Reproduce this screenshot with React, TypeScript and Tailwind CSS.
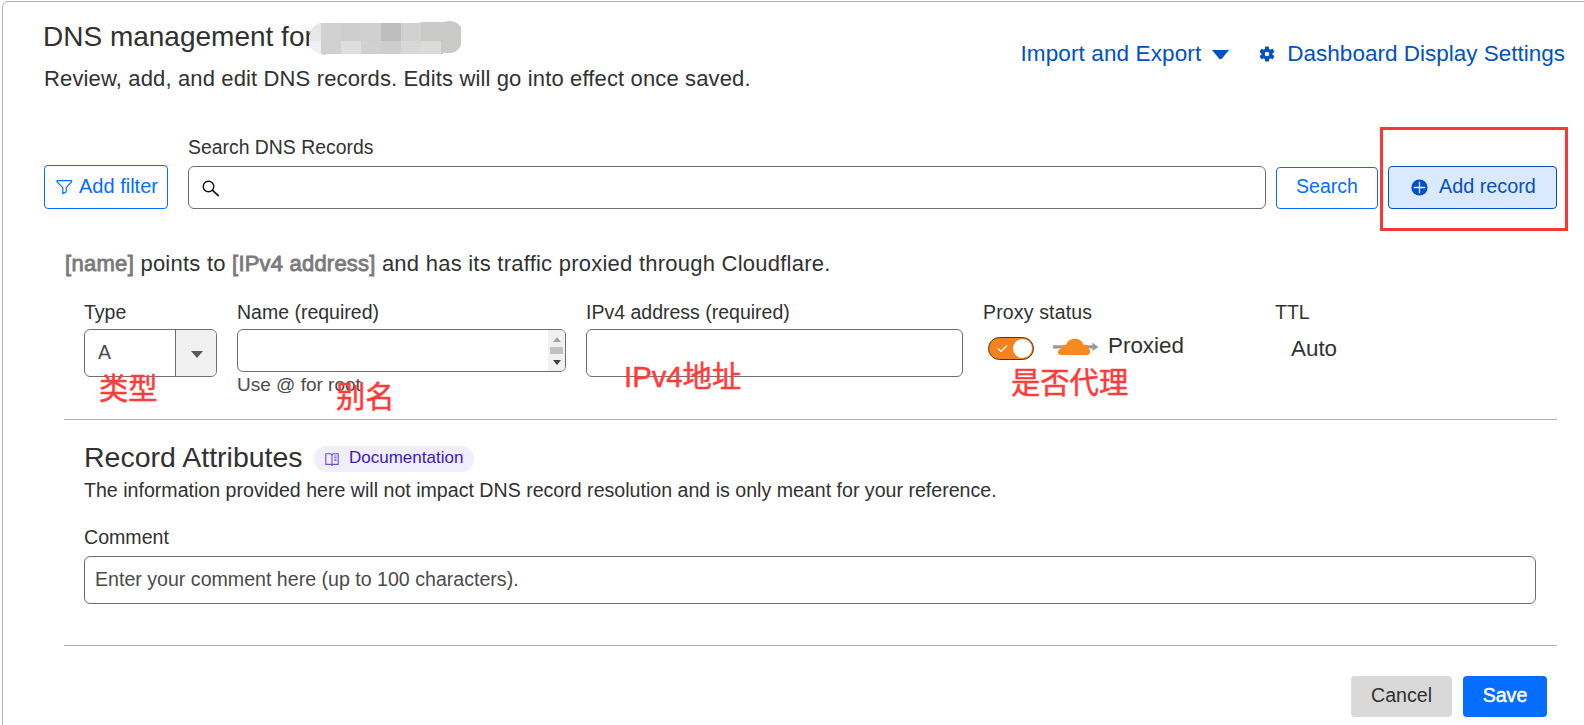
import React from "react";

function FilterIcon() {
  return (
    <svg width="17" height="16" viewBox="0 0 17 16" fill="none" stroke="#056dff" strokeWidth="1.2" strokeLinejoin="round">
      <path d="M1 1.600h14.600v1.200L10.200 8.600v4.400L6.800 14.600V8.600L1 2.800z" />
    </svg>
  );
}

function MagnifierIcon() {
  return (
    <svg width="18" height="18" viewBox="0 0 18 18" fill="none" stroke="#111" strokeWidth="1.4">
      <circle cx="6.500" cy="6.500" r="5.300" />
      <path d="M10.400 10.200l6.400 6" strokeWidth="1.600" />
    </svg>
  );
}

function GearIcon() {
  return (
    <svg width="16" height="18" viewBox="0 0 16 16">
      <g fill="#0051c3">
        <circle cx="8" cy="8" r="5.6" />
        <rect x="6" y="0.4" width="4" height="15.2" rx="0.9" />
        <rect x="6" y="0.4" width="4" height="15.2" rx="0.9" transform="rotate(60 8 8)" />
        <rect x="6" y="0.4" width="4" height="15.2" rx="0.9" transform="rotate(120 8 8)" />
      </g>
      <circle cx="8" cy="8" r="2.3" fill="#fff" />
    </svg>
  );
}

function PlusCircleIcon() {
  return (
    <svg width="17" height="17" viewBox="0 0 17 17">
      <circle cx="8.5" cy="8.5" r="8.1" fill="#0051c3" />
      <path d="M8.5 2.800v11.400M2.800 8.500h11.400" stroke="#dbe9ff" strokeWidth="1.300" />
    </svg>
  );
}

function BookIcon() {
  return (
    <svg width="14" height="13" viewBox="0 0 14 13" fill="none" stroke="#6b4fd8" strokeWidth="1.1">
      <path d="M7 2v10.4M7 2L5.800.800H.800v10.600h5L7 12.400l1.200-1h5V.800h-5z" />
      <path d="M9.200 3h2.400M9.200 4.600h2.400M9.200 6.200h2.400M9.200 7.600h2.400" strokeWidth="0.8" />
    </svg>
  );
}

function ProxyCloud() {
  return (
    <svg width="46" height="18" viewBox="0 0 46 18">
      <path d="M0 7.200h39.500V4.800L45.400 9 39.500 13V10.600H0z" fill="#999" />
      <path
        d="M8.400 17C6 17 5 15.600 5 14.200C5 12 6.600 10.900 8.400 10.700C8 8 10.400 6.300 12.800 7.300C13.800 3.500 17.600 .8 22 .8C26.400 .8 29.500 3.300 30.800 6.900C33.800 6.600 35.300 8.500 35.200 10.400C36.600 11 37.200 12.600 37 14.200C36.800 16 35.800 17 34 17Z"
        fill="#f6891f"
      />
    </svg>
  );
}

function Redaction() {
  return (
    <svg width="154" height="36" viewBox="0 0 154 36">
      <defs>
        <clipPath id="blob">
          <path d="M12 2H110V1.300H134C138 0 142 0 146 1C150 3 152 6 152 8V24C150 29 145 32 139 32H134V33H18L16 34L12 33C5 31 0 26 0 19C0 11 4 4 12 2Z" />
        </clipPath>
      </defs>
      <g clipPath="url(#blob)" shapeRendering="crispEdges">
        <rect width="154" height="36" fill="#d1d1d1" />
        <rect width="12" height="20" fill="#e5e7e9" />
        <rect y="20" width="12" height="16" fill="#eef1f4" />
        <rect x="32" width="20" height="20" fill="#d0cdcf" />
        <rect x="32" y="20" width="20" height="16" fill="#dedede" />
        <rect x="52" width="20" height="20" fill="#d0cfd0" />
        <rect x="72" width="20" height="20" fill="#bdbdbd" />
        <rect x="72" y="20" width="20" height="16" fill="#cecece" />
        <rect x="92" y="20" width="20" height="16" fill="#d8d8d8" />
        <rect x="112" width="42" height="36" fill="#c9c9c8" />
        <rect x="112" y="20" width="20" height="16" fill="#dbdbda" />
      </g>
    </svg>
  );
}

function Note({ className, children }: { className: string; children: React.ReactNode }) {
  return (
    <span className={"absolute text-[29.3px] leading-[40px] text-[#ff3b3b] [-webkit-text-stroke:0.5px_#ff3b3b] " + className}>
      {children}
    </span>
  );
}

export default function App() {
  return (
    <div className="relative h-[725px] w-[1584px] overflow-hidden bg-white pl-[2px] pt-px font-['Liberation_Sans','Noto_Sans_CJK_SC',sans-serif] text-[#313131]">
      <div className="h-[740px] w-[1590px] rounded-tl-[6px] border border-[#b2b2b2] pl-[41px] whitespace-nowrap">
        <header className="flex h-[132px] w-[1541px] justify-between">
          <div className="pt-[17px]">
            <div className="relative h-[36px] w-[430px] text-[28px] leading-[36px]">
              <span className="ml-[-1px]">DNS management for</span>
              <div className="absolute left-[265px] top-[2px]">
                <Redaction />
              </div>
            </div>
            <p className="mt-[10px] h-[28px] text-[22px] leading-[28px] tracking-[0.14px]">
              Review, add, and edit DNS records. Edits will go into effect once saved.
            </p>
          </div>
          <nav className="mr-[20px] mt-[37px] flex h-[30px] items-center text-[22.5px] leading-[30px] text-[#0051c3]">
            <span className="tracking-[0.12px]">Import and Export</span>
            <svg className="ml-[11px] mr-[30px] mt-px" width="17" height="10" viewBox="0 0 17 10">
              <path d="M0 0h17L10 8.500Q8.500 10 7 8.500z" fill="#0051c3" />
            </svg>
            <GearIcon />
            <span className="ml-[12px]">Dashboard Display Settings</span>
          </nav>
        </header>

        <section className="flex h-[75px] items-end">
          <button className="flex h-[44px] w-[124px] items-center rounded-[4px] border border-[#056dff] pl-[11px] text-[20px] text-[#056dff]">
            <FilterIcon />
            <span className="ml-[6px] pb-[2px]">Add filter</span>
          </button>
          <div className="ml-[20px] w-[1078px]">
            <div className="mb-[7px] h-[24px] text-[19.4px] leading-[24px]">Search DNS Records</div>
            <div className="flex h-[43px] items-center rounded-[6px] border border-[#6e6e6e] pl-[13px] pt-[2px]">
              <MagnifierIcon />
            </div>
          </div>
          <button className="ml-[10px] h-[42px] w-[102px] rounded-[4px] border border-[#056dff] pb-[2px] text-[19.5px] text-[#056dff]">
            Search
          </button>
          <button className="relative ml-[10px] flex h-[43px] w-[169px] items-center rounded-[4px] border border-[#0051c3] bg-[#dbe9ff] pl-[22px] text-[19.8px] text-[#0051c3]">
            <PlusCircleIcon />
            <span className="ml-[11px] pb-px">Add record</span>
            <span className="absolute left-[-9px] top-[-40px] h-[104px] w-[188px] border-[3px] border-[#fa3737]" />
          </button>
        </section>

        <form className="w-[1513px] pl-[20px]">
          <p className="mt-[41px] h-[28px] pl-px text-[22px] leading-[28px] tracking-[0.24px]">
            <span className="tracking-[0.3px] text-[#7b7b7b] [-webkit-text-stroke:0.9px_#7b7b7b]">[name]</span> points to{" "}
            <span className="tracking-[0.2px] text-[#7b7b7b] [-webkit-text-stroke:0.9px_#7b7b7b]">[IPv4 address]</span> and has its traffic proxied through Cloudflare.
          </p>

          <div className="mt-[21px] flex h-[121px] items-start border-b border-[#b2b2b2] pl-[20px] text-[19.5px] leading-[24px]">
            <div className="relative w-[153px]">
              <div className="h-[30px] pt-px">Type</div>
              <div className="flex h-[48px] w-[133px] overflow-hidden rounded-[6px] border border-[#6e6e6e]">
                <div className="w-[91px] border-r border-[#6e6e6e] pl-[13px] pt-[10px] text-[#4a4a4a]">A</div>
                <div className="flex flex-1 items-center justify-center bg-[#f1f1f1] pl-[2px] pt-[2px]">
                  <svg width="12" height="7" viewBox="0 0 12 7">
                    <path d="M0 0h12L6 7z" fill="#595959" />
                  </svg>
                </div>
              </div>
              <Note className="left-[15px] top-[70px]">类型</Note>
            </div>

            <div className="relative w-[349px]">
              <div className="h-[30px] pt-px">Name (required)</div>
              <div className="flex h-[43px] w-[329px] justify-end overflow-hidden rounded-[6px] border border-[#6e6e6e]">
                <div className="flex w-[17px] flex-col items-center bg-[#f1f1f1] pt-[7px]">
                  <svg width="8" height="5" viewBox="0 0 8 5">
                    <path d="M0 5h8L4 0z" fill="#a3a3a3" />
                  </svg>
                  <div className="mt-[5px] h-[7px] w-[13px] bg-[#c1c1c1]" />
                  <svg className="mt-[6px]" width="8" height="5" viewBox="0 0 8 5">
                    <path d="M0 0h8L4 5z" fill="#404040" />
                  </svg>
                </div>
              </div>
              <div className="pt-px text-[19px] text-[#4a4a4a]">Use @ for root</div>
              <Note className="left-[99px] top-[78px]">别名</Note>
            </div>

            <div className="relative w-[397px]">
              <div className="h-[30px] pt-px">IPv4 address (required)</div>
              <div className="h-[48px] w-[377px] rounded-[6px] border border-[#6e6e6e]" />
              <Note className="left-[38px] top-[58px]">IPv4地址</Note>
            </div>

            <div className="relative w-[292px]">
              <div className="h-[30px] pt-px tracking-[0.15px]">Proxy status</div>
              <div className="flex h-[36px] items-center pl-[5px]">
                <div className="mt-[2px] flex h-[23px] w-[46px] items-center justify-between rounded-full border border-[#5c3510] bg-[#f6821f] pl-[8px] pr-px">
                  <svg width="11" height="9" viewBox="0 0 11 9" fill="none" stroke="#fff" strokeWidth="1.200">
                    <path d="M1 4.500l3 3L10 1.500" />
                  </svg>
                  <div className="h-[19px] w-[19px] rounded-full bg-white" />
                </div>
                <div className="ml-[19px]">
                  <ProxyCloud />
                </div>
                <span className="ml-[9px] mt-[-3px] text-[22.4px]">Proxied</span>
              </div>
              <Note className="left-[28px] top-[64px]">是否代理</Note>
            </div>

            <div>
              <div className="h-[30px] pt-px">TTL</div>
              <div className="h-[36px] pl-[16px] text-[22.4px] leading-[39px]">Auto</div>
            </div>
          </div>

          <div className="h-[226px] border-b border-[#b2b2b2] pl-[20px] pt-[20px]">
            <div className="flex h-[36px] items-center">
              <h2 className="mt-[-2px] w-[230px] text-[28.5px] leading-[36px]">Record Attributes</h2>
              <a className="mt-[2px] flex h-[26px] w-[160px] items-center rounded-full bg-[#f0edfd] pl-[11px] text-[17px] text-[#3a20b5]">
                <BookIcon />
                <span className="ml-[10px] mt-[-2px]">Documentation</span>
              </a>
            </div>
            <p className="mt-px h-[26px] text-[19.6px] leading-[26px]">
              The information provided here will not impact DNS record resolution and is only meant for your reference.
            </p>
            <div className="mt-[21px] h-[26px] text-[19.6px] leading-[26px]">Comment</div>
            <div className="mt-[6px] h-[48px] w-[1452px] rounded-[6px] border border-[#6e6e6e] pl-[10px] text-[19.6px] leading-[45px] text-[#4a4a4a]">
              Enter your comment here (up to 100 characters).
            </div>
          </div>

          <div className="flex justify-end gap-[11px] pr-[10px] pt-[30px] text-[19.6px]">
            <button type="button" className="h-[41px] w-[101px] rounded-[4px] bg-[#d9d9d9] pb-px">Cancel</button>
            <button type="button" className="h-[41px] w-[84px] rounded-[4px] bg-[#056dff] pb-px text-white [-webkit-text-stroke:0.5px_white]">Save</button>
          </div>
        </form>
      </div>
    </div>
  );
}
